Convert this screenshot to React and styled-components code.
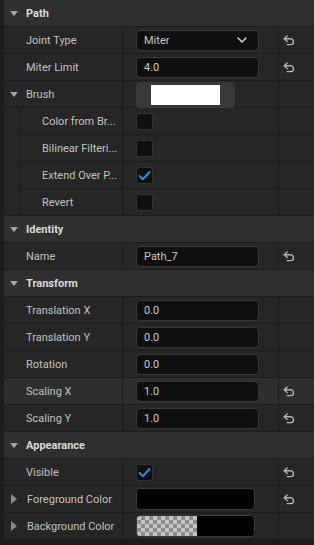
import React from "react";
import styled, { createGlobalStyle, css } from "styled-components";

const Global = createGlobalStyle`
  html, body { margin: 0; padding: 0; background: #1c1c1c; }
  body { font-family: Roboto, "Noto Sans", sans-serif; font-size: 11px; color: #c0c0c0; }
  * { box-sizing: border-box; }
`;

const Panel = styled.div`
  display: flex;
  flex-direction: column;
  gap: 1px;
  width: 314px;
  min-height: 545px;
  padding-left: 4px;
  background: #1c1c1c;
`;

const Header = styled.div`
  display: flex;
  align-items: center;
  height: 26px;
  padding-left: 6px;
  gap: 8px;
  background: #2f2f2f;
  color: #dadada;
  font-weight: 700;
`;

const Caret = styled.span`
  width: 0;
  height: 0;
  display: inline-block;
  ${(p) =>
    p.$open
      ? css`
          border-left: 4px solid transparent;
          border-right: 4px solid transparent;
          border-top: 5px solid #a6a6a6;
          margin-top: 1px;
        `
      : css`
          border-top: 5px solid transparent;
          border-bottom: 5px solid transparent;
          border-left: 6px solid #8a8a8a;
          margin-left: 1px;
          margin-right: 2px;
        `}
`;

const Row = styled.div`
  display: grid;
  grid-template-columns: ${(p) => (p.$sub ? "102px" : "118px")} 155px 35px;
  column-gap: 1px;
  height: 26px;
  > * { background: ${(p) => (p.$hover ? "#2e2e2e" : "#262626")}; }
`;

const NameCell = styled.div`
  display: flex;
  align-items: center;
  gap: 8px;
  padding-left: ${(p) => (p.$caret ? "6px" : "22px")};
  white-space: nowrap;
  overflow: hidden;
  color: #c2c2c2;
`;

const ValueCell = styled.div`
  display: flex;
  align-items: center;
  padding-left: 13px;
`;

const ResetCell = styled.div`
  display: flex;
  align-items: center;
  padding-left: 4px;
  padding-top: 1px;
`;

const Input = styled.div`
  width: 123px;
  height: 21px;
  display: flex;
  align-items: center;
  justify-content: space-between;
  padding: 0 11px 0 7px;
  background: #0f0f0f;
  border: 1px solid #383838;
  border-radius: 4px;
  color: #c8c8c8;
`;

const BrushButton = styled.div`
  width: 99px;
  height: 26px;
  padding: 3px 15px;
  background: #383838;
  border-radius: 4px;
  margin-bottom: -1px;
`;

const Swatch = styled.div`
  width: 100%;
  height: 100%;
  background: #ffffff;
`;

const Check = styled.div`
  width: 17px;
  height: 17px;
  background: #0f0f0f;
  border: 1px solid #333;
  border-radius: 3px;
  display: flex;
  align-items: center;
  justify-content: center;
`;

const ColorBar = styled.div`
  width: 119px;
  height: 22px;
  border: 1px solid #3a3a3a;
  border-radius: 4px;
  overflow: hidden;
  display: flex;
  background: #000;
`;

const Checker = styled.div`
  width: 60px;
  height: 100%;
  background-color: #c4c4c4;
  background-image:
    linear-gradient(45deg, #8c8c8c 25%, transparent 25%, transparent 75%, #8c8c8c 75%),
    linear-gradient(45deg, #8c8c8c 25%, transparent 25%, transparent 75%, #8c8c8c 75%);
  background-size: 8px 8px;
  background-position: 0 0, 4px 4px;
`;

const SubGroup = styled.div`
  display: flex;
  gap: 1px;
`;

const Indent = styled.div`
  width: 15px;
  background: #262626;
`;

const SubRows = styled.div`
  display: flex;
  flex-direction: column;
  gap: 1px;
`;

const ResetIcon = () => (
  <svg width="12" height="11" viewBox="0 0 12 11" fill="none">
    <path d="M4.2 1 L1.2 3.8 L4.2 6.6" stroke="#b4b4b4" strokeWidth="1.4" strokeLinecap="round" strokeLinejoin="round" />
    <path d="M1.4 3.8 H7.6 A2.9 2.9 0 0 1 7.6 9.6 H4.2" stroke="#b4b4b4" strokeWidth="1.4" strokeLinecap="round" />
  </svg>
);

const Chevron = () => (
  <svg width="10" height="6" viewBox="0 0 10 6" fill="none">
    <path d="M1 1 L5 5 L9 1" stroke="#d4d4d4" strokeWidth="1.5" strokeLinecap="round" strokeLinejoin="round" />
  </svg>
);

const Tick = () => (
  <svg width="13" height="11" viewBox="0 0 13 11" fill="none">
    <path d="M1.5 6 L5 9.2 L11.5 2" stroke="#2b8ef2" strokeWidth="2" strokeLinecap="round" strokeLinejoin="round" />
  </svg>
);

const Prop = ({ label, children, reset, hover, sub, caret }) => (
  <Row $hover={hover} $sub={sub}>
    <NameCell $caret={!!caret}>
      {caret && <Caret $open={caret === "open"} />}
      {label}
    </NameCell>
    <ValueCell>{children}</ValueCell>
    <ResetCell>{reset && <ResetIcon />}</ResetCell>
  </Row>
);

const Section = ({ title }) => (
  <Header>
    <Caret $open />
    {title}
  </Header>
);

export default function App() {
  return (
    <>
      <Global />
      <Panel>
        <Section title="Path" />
        <Prop label="Joint Type" reset>
          <Input>
            Miter
            <Chevron />
          </Input>
        </Prop>
        <Prop label="Miter Limit" reset>
          <Input>4.0</Input>
        </Prop>
        <Prop label="Brush" caret="open">
          <BrushButton>
            <Swatch />
          </BrushButton>
        </Prop>
        <SubGroup>
          <Indent />
          <SubRows>
            <Prop sub label="Color from Br...">
              <Check />
            </Prop>
            <Prop sub label="Bilinear Filteri...">
              <Check />
            </Prop>
            <Prop sub label="Extend Over P...">
              <Check>
                <Tick />
              </Check>
            </Prop>
            <Prop sub label="Revert">
              <Check />
            </Prop>
          </SubRows>
        </SubGroup>
        <Section title="Identity" />
        <Prop label="Name" reset>
          <Input>Path_7</Input>
        </Prop>
        <Section title="Transform" />
        <Prop label="Translation X">
          <Input>0.0</Input>
        </Prop>
        <Prop label="Translation Y">
          <Input>0.0</Input>
        </Prop>
        <Prop label="Rotation">
          <Input>0.0</Input>
        </Prop>
        <Prop label="Scaling X" reset hover>
          <Input>1.0</Input>
        </Prop>
        <Prop label="Scaling Y" reset>
          <Input>1.0</Input>
        </Prop>
        <Section title="Appearance" />
        <Prop label="Visible" reset>
          <Check>
            <Tick />
          </Check>
        </Prop>
        <Prop label="Foreground Color" caret="closed" reset>
          <ColorBar />
        </Prop>
        <Prop label="Background Color" caret="closed">
          <ColorBar>
            <Checker />
          </ColorBar>
        </Prop>
      </Panel>
    </>
  );
}
